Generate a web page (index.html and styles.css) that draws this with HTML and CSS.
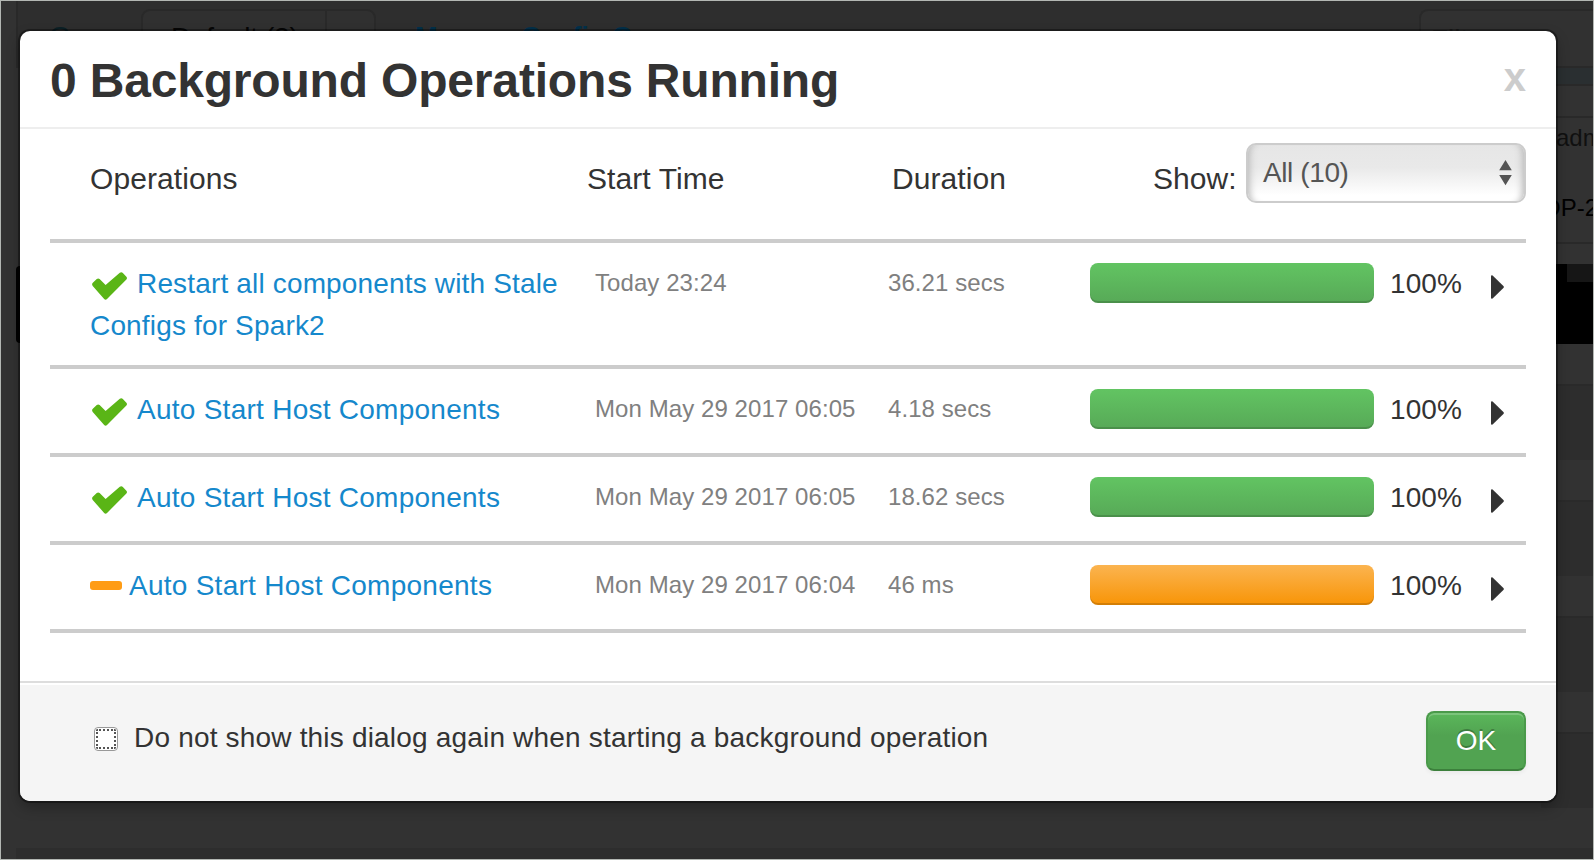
FILE: index.html
```html
<!DOCTYPE html>
<html lang="en">
<head>
<meta charset="utf-8">
<title>Background Operations</title>
<link rel="stylesheet" href="styles.css">
</head>
<body>
<svg class="defs" width="0" height="0">
  <symbol id="check" viewBox="0 0 34 27"><path d="M.8 10.4 4.6 6.8Q6 5.6 7.4 6.8L13.2 12.6 27 .6Q28.6-.4 30 .8L33.4 4.4Q34.6 5.8 33.4 7.2L14.6 26.1Q13.2 27.4 11.8 26.1L.7 13.4Q-.6 11.8.8 10.4Z" fill="#5ab516"/></symbol>
  <symbol id="caret" viewBox="0 0 13 24"><path d="M0 1.2Q0 0 1.6.4L12.4 11Q13.4 12 12.4 13L1.6 23.6Q0 24 0 22.8Z" fill="#333"/></symbol>
</svg>
<div class="page">
  <div class="toolbar">
    <span class="group">Group</span>
    <div class="picker"><span class="picker-name">Default (2)</span><span class="picker-toggle"></span></div>
    <span class="manage">Manage Config Groups</span>
    <span class="filter">Filter...</span>
  </div>
  <div class="side">
    <div class="side-band"></div>
    <div class="side-head"></div>
    <div class="side-info"><span>adm</span><b>HDP-2</b></div>
    <div class="side-gap"></div>
    <div class="side-black"><div class="side-tab"></div></div>
    <div class="stripe"></div><div class="stripe dark"></div>
    <div class="stripe"></div><div class="stripe dark"></div>
    <div class="stripe"></div><div class="stripe dark"></div>
    <div class="stripe"></div><div class="stripe dark"></div>
  </div>
  <div class="bottom"></div>
</div>
<div class="left-edge"></div>

<div class="modal">
  <div class="modal-header">
    <h3>0 Background Operations Running</h3>
    <span class="close">x</span>
  </div>
  <div class="modal-body">
    <div class="cols">
      <span>Operations</span><span>Start Time</span><span>Duration</span>
      <span>Show:</span>
      <div class="select"><span>All (10)</span>
        <svg width="13" height="26" viewBox="0 0 13 26"><path d="M6.5 0 12.8 10.3H.2ZM.2 15H12.8L6.5 25.3Z" fill="#555"/></svg>
      </div>
    </div>
    <div class="row tall">
      <div class="name"><svg class="check"><use href="#check"/></svg>Restart all components with Stale<br>Configs for Spark2</div>
      <div class="time">Today 23:24</div><div class="time">36.21 secs</div>
      <div class="bar"></div><div class="pct">100%</div><svg class="caret"><use href="#caret"/></svg>
    </div>
    <div class="row">
      <div class="name auto"><svg class="check"><use href="#check"/></svg>Auto Start Host Components</div>
      <div class="time">Mon May 29 2017 06:05</div><div class="time">4.18 secs</div>
      <div class="bar"></div><div class="pct">100%</div><svg class="caret"><use href="#caret"/></svg>
    </div>
    <div class="row">
      <div class="name auto"><svg class="check"><use href="#check"/></svg>Auto Start Host Components</div>
      <div class="time">Mon May 29 2017 06:05</div><div class="time">18.62 secs</div>
      <div class="bar"></div><div class="pct">100%</div><svg class="caret"><use href="#caret"/></svg>
    </div>
    <div class="row">
      <div class="name auto"><i class="minus"></i>Auto Start Host Components</div>
      <div class="time">Mon May 29 2017 06:04</div><div class="time">46 ms</div>
      <div class="bar warn"></div><div class="pct">100%</div><svg class="caret"><use href="#caret"/></svg>
    </div>
  </div>
  <div class="modal-footer">
    <span class="checkbox"></span>
    <span class="label">Do not show this dialog again when starting a background operation</span>
    <span class="ok">OK</span>
  </div>
</div>
</body>
</html>
```
FILE: styles.css
```css
* { box-sizing: border-box; }
body {
  margin: 0;
  width: 1594px;
  height: 860px;
  overflow: hidden;
  position: relative;
  font-family: "Liberation Sans", Arial, sans-serif;
  font-size: 28px;
  color: #333;
}
.defs { position: absolute; }

/* dimmed page behind the dialog */
.page {
  width: 1594px;
  height: 860px;
  border: 1px solid #b3b7b3;
  background: #323232;
  display: flex;
  flex-direction: column;
  overflow: hidden;
  line-height: 1;
}
.toolbar {
  flex: none;
  height: 67px;
  margin-left: 15px;
  padding: 8px 0 0 31px;
  display: flex;
  background: #2e2e2e;
  border-left: 2px solid #292929;
}
.toolbar > * { flex: none; }
.group { width: 92px; padding-top: 14px; color: #0b2026; }
.picker { display: flex; width: 235px; border: 2px solid #292929; border-radius: 9px; background: #303030; color: #060606; }
.picker-name { width: 184px; padding: 13px 0 0 28px; border-right: 2px solid #292929; white-space: nowrap; letter-spacing: -.3px; }
.manage { width: 1043px; padding: 15px 0 0 39px; color: #02304a; font-weight: bold; font-size: 27px; letter-spacing: -.3px; }
.filter { width: 174px; padding: 15px 0 0 10px; background: #313131; border: 2px solid #292929; border-right: 0; border-radius: 9px 0 0 0; color: #202020; }
.side { flex: none; margin-left: 1540px; height: 741px; display: flex; flex-direction: column; overflow: hidden; }
.side > div { flex: none; }
.side-band { height: 18px; background: #2a2f31; border-bottom: 2px solid #292929; }
.side-head { height: 32px; border-bottom: 2px solid #292929; }
.side-info { height: 126px; padding: 8px 0 0 15px; border-bottom: 2px solid #292929; font-size: 24px; white-space: nowrap; color: #101010; }
.side-info span { display: block; height: 70px; }
.side-info b { display: block; margin-left: -30px; font-weight: normal; color: #000; }
.side-gap { height: 20px; }
.side-black { height: 80px; background: #000; }
.side-tab { height: 18px; margin-left: 26px; background: #161616; }
.stripe { height: 40px; background: #323232; }
.stripe.dark { height: 76px; background: #2d2d2d; border-top: 2px solid #2a2a2a; }
.bottom { flex: none; margin: 39px 0 0 15px; height: 12px; background: #2d2d2d; }
/* selected tab showing past the dialog's left side */
.left-edge { position: absolute; left: 16px; top: 266px; width: 8px; height: 77px; border-radius: 4px 0 0 4px; background: #000; }

.modal {
  position: absolute;
  left: 20px;
  top: 31px;
  width: 1536px;
  height: 770px;
  border-radius: 10px;
  background: #fff;
  box-shadow: 0 0 0 2px rgba(0, 0, 0, .36), 0 6px 14px rgba(0, 0, 0, .3);
  display: flex;
  flex-direction: column;
}
.modal-header {
  height: 98px;
  padding: 0 30px;
  border-bottom: 2px solid #eee;
  display: flex;
  justify-content: space-between;
}
h3 { margin: 0; padding-top: 20px; font-size: 48px; line-height: 60px; letter-spacing: -.18px; }
.close { padding-top: 26px; font-weight: bold; font-size: 40px; line-height: 40px; color: #ccc; }
.modal-body { flex: 1; padding: 14px 30px 0; }
.cols {
  height: 100px;
  display: grid;
  grid-template-columns: 497px 305px 261px 93px 280px;
  padding-left: 40px;
  border-bottom: 4px solid #ccc;
  font-size: 30px;
  line-height: 36px;
  letter-spacing: .08px;
}
.cols > span { padding-top: 18px; }
.select {
  height: 60px;
  border: 2px solid #ccc;
  border-radius: 10px;
  padding: 0 12px 0 15px;
  display: flex;
  align-items: center;
  justify-content: space-between;
  color: #555;
  font-size: 28px;
  letter-spacing: -.4px;
  background: linear-gradient(#e6e6e6 0, #e9e9e9 40%, #fff 90%);
  box-shadow: inset 9px 0 7px -7px #bbb, inset -9px 0 7px -7px #bbb;
}
.row {
  height: 88px;
  padding: 20px 0 0 40px;
  border-bottom: 4px solid #ccc;
  display: grid;
  grid-template-columns: 505px 293px 202px 300px 101px 13px;
  align-items: start;
}
.row.tall { height: 126px; }
.name { color: #1588cc; line-height: 42px; letter-spacing: .16px; white-space: nowrap; }
.name.auto { letter-spacing: .26px; }
.check { width: 35px; height: 28px; margin: 0 10px 0 2px; vertical-align: -7px; }
.minus { display: inline-block; width: 32px; height: 9px; margin-right: 7px; border-radius: 3px; background: #ff9c15; vertical-align: 5px; }
.time { font-size: 24px; line-height: 40px; color: #808080; letter-spacing: .08px; }
.bar {
  width: 284px;
  height: 40px;
  border-radius: 8px;
  background: linear-gradient(#62c462, #57a957);
  box-shadow: inset 0 -2px 0 rgba(0, 0, 0, .15);
}
.bar.warn { background: linear-gradient(#fbb450, #f89406); }
.pct { line-height: 41px; letter-spacing: .1px; }
.caret { width: 13px; height: 24px; margin-top: 12px; }
.modal-footer {
  height: 120px;
  border-top: 2px solid #ddd;
  border-radius: 0 0 10px 10px;
  background: #f5f5f5;
  box-shadow: inset 0 2px 0 #fff;
  padding: 28px 30px 0 74px;
  display: flex;
}
.checkbox {
  width: 24px;
  height: 24px;
  margin-top: 16px;
  border: 1px solid #999;
  border-radius: 4px;
  background: #fff;
  outline: 2px dotted #555;
  outline-offset: -4px;
}
.label { flex: 1; padding-left: 16px; line-height: 54px; letter-spacing: .185px; }
.ok {
  width: 100px;
  height: 60px;
  border: 2px solid #4a9a4a;
  border-bottom-color: #3c803c;
  border-radius: 8px;
  background: linear-gradient(#5bb75b, #51a351 40%);
  box-shadow: inset 0 2px 0 rgba(255, 255, 255, .2), 0 2px 4px rgba(0, 0, 0, .05);
  color: #fff;
  text-align: center;
  line-height: 56px;
  text-shadow: 0 -2px 0 rgba(0, 0, 0, .25);
}
```
